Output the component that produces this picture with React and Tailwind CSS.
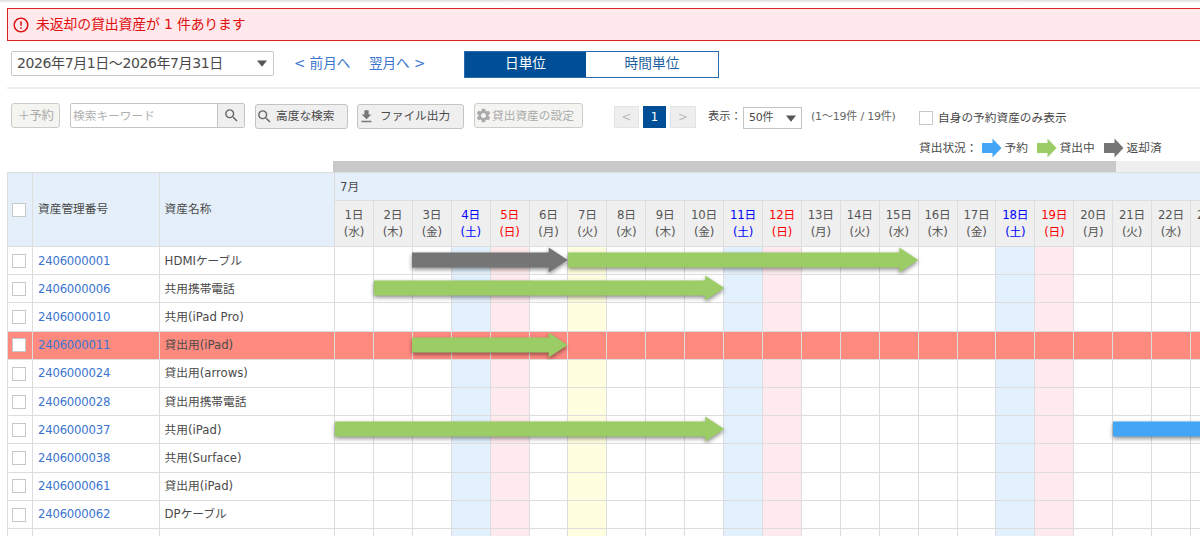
import React, { useState } from 'react'
import { MdSearch, MdFileDownload, MdSettings, MdErrorOutline } from 'react-icons/md'

const DAY_WIDTH = 38.92
const WEEKDAYS = ['水', '木', '金', '土', '日', '月', '火']
const TODAY = 7

const DAYS = Array.from({ length: 23 }, (_, i) => ({
  day: i + 1,
  weekday: WEEKDAYS[i % 7]
}))

const COLORS = {
  reserved: '#42a5f5',
  lent: '#9ccc65',
  returned: '#757575'
}

// from = first day, to = last day of the period
const ASSETS = [
  { id: '2406000001', name: 'HDMIケーブル', bars: [{ from: 3, to: 6, status: 'returned' }, { from: 7, to: 15, status: 'lent' }] },
  { id: '2406000006', name: '共用携帯電話', bars: [{ from: 2, to: 10, status: 'lent' }] },
  { id: '2406000010', name: '共用(iPad Pro)', bars: [] },
  { id: '2406000011', name: '貸出用(iPad)', overdue: true, bars: [{ from: 3, to: 6, status: 'lent' }] },
  { id: '2406000024', name: '貸出用(arrows)', bars: [] },
  { id: '2406000028', name: '貸出用携帯電話', bars: [] },
  { id: '2406000037', name: '共用(iPad)', bars: [{ from: 1, to: 10, status: 'lent' }, { from: 21, to: 27, status: 'reserved' }] },
  { id: '2406000038', name: '共用(Surface)', bars: [] },
  { id: '2406000061', name: '貸出用(iPad)', bars: [] },
  { id: '2406000062', name: 'DPケーブル', bars: [] },
  { id: '', name: '', bars: [] }
]

function dayText(weekday) {
  if (weekday === '土') return 'text-[#0000ff]'
  if (weekday === '日') return 'text-[#ff0000]'
  return 'text-[#555]'
}

function dayFill(day, weekday) {
  if (day === TODAY) return 'bg-[#ffffdf]'
  if (weekday === '土') return 'bg-[#e2f1fd]'
  if (weekday === '日') return 'bg-[#ffeaed]'
  return 'bg-white'
}

function Checkbox() {
  return <span className="block w-[14px] h-[14px] shrink-0 border border-[#c8c8c8] bg-white" />
}

function Caret() {
  return (
    <svg width="10" height="7" viewBox="0 0 10 7" className="shrink-0">
      <path d="M0 0.5h10L5 6.7z" fill="#555" />
    </svg>
  )
}

function Arrow({ from, to, status }) {
  const width = (to - from + 1) * DAY_WIDTH
  const neck = width - 19
  return (
    <svg
      className="absolute top-0 overflow-visible drop-shadow-[0px_2px_2px_rgba(0,0,0,0.45)]"
      style={{ left: (from - 1) * DAY_WIDTH - 0.4 }}
      width={width}
      height="26"
    >
      <path d={`M0 5.5H${neck}V0.5L${width} 13L${neck} 25.5V20.5H0z`} fill={COLORS[status]} />
    </svg>
  )
}

function LegendItem({ status, label, className }) {
  return (
    <div className={`flex items-center gap-[2.500px] ${className}`}>
      <svg width="20" height="20" viewBox="0 0 20 20">
        <path d="M0 5h10.500V0.500L19.500 10L10.500 19.500V15H0z" fill={COLORS[status]} />
      </svg>
      <span>{label}</span>
    </div>
  )
}

function AssetRow({ asset }) {
  const cell = asset.overdue ? 'bg-[#ff8a80]' : 'bg-white'
  return (
    <div className="flex h-[28.2px]">
      <div className={`w-[26px] shrink-0 flex items-center pl-[4px] pt-[0.6px] border-x border-b border-[#ddd] ${cell}`}>
        <Checkbox />
      </div>
      <div className={`w-[127px] shrink-0 flex items-center pl-[5px] border-r border-b border-[#ddd] text-[#3a75cf] tracking-[-0.22px] ${cell}`}>
        {asset.id}
      </div>
      <div className={`w-[175px] shrink-0 flex items-center pl-[4.6px] border-r border-b border-[#ddd] ${cell}`}>
        {asset.name}
      </div>
      <div className="relative flex shrink-0">
        {DAYS.map(({ day, weekday }) => (
          <div
            key={day}
            className={`w-[38.92px] shrink-0 border-r border-b border-[#ddd] ${asset.overdue ? cell : dayFill(day, weekday)}`}
          />
        ))}
        {asset.bars.map(bar => (
          <Arrow key={bar.from} {...bar} />
        ))}
      </div>
    </div>
  )
}

export default function App() {
  const [unit, setUnit] = useState('day')

  const unitClass = active => (active ? 'bg-[#004f96] text-white' : 'bg-white text-[#1f5f9f]')

  return (
    <div className="w-[1200px] h-[536px] overflow-hidden bg-white whitespace-nowrap text-[11.7px] leading-[18px] text-[#4a4a4a] font-['DejaVu_Sans','Noto_Sans_CJK_JP',sans-serif]">
      <div className="h-[3px] bg-gradient-to-b from-[#dcdcdc] to-white" />

      {/* Overdue alert */}
      <div className="mt-[5px] ml-[7px] h-[33px] flex items-center border border-r-0 border-[#dd2222] bg-[#ffe9ec] text-[#e01010] text-[13.9px]">
        <MdErrorOutline className="w-[18px] h-[18px] ml-[4px]" />
        <span className="ml-[6px] pb-[2px] tracking-[-0.15px]">未返却の貸出資産が 1 件あります</span>
      </div>

      {/* Period and unit */}
      <div className="ml-[7px] h-[48px] pl-[4px] pt-[10px] flex items-start border-b-2 border-[#ececec] text-[14px]">
        <div className="w-[263px] h-[25px] flex items-center justify-between pl-[5px] pr-[6px] border border-[#c8c8c8] rounded-[2px]">
          <span className="pb-px tracking-[-0.4px]">2026年7月1日〜2026年7月31日</span>
          <Caret />
        </div>
        <a className="ml-[20px] mt-[3px] w-[57px] text-[#3a75cf] text-[13.6px] tracking-[-0.05px]">&lt; 前月へ</a>
        <a className="ml-[18px] mt-[3px] w-[57px] text-[#3a75cf] text-[13.6px] tracking-[-0.05px]">翌月へ &gt;</a>
        <div className="ml-[38px] w-[255px] h-[27px] flex border border-[#2a6bac] text-[13.7px]">
          <button onClick={() => setUnit('day')} className={`w-[121px] pb-[3px] ${unitClass(unit === 'day')}`}>日単位</button>
          <button onClick={() => setUnit('hour')} className={`flex-1 pb-[3px] ${unitClass(unit === 'hour')}`}>時間単位</button>
        </div>
      </div>

      {/* Toolbar */}
      <div className="ml-[11px] mt-[14px] h-[27px] flex items-start">
        <button className="w-[49px] h-[25px] flex items-center justify-center border border-[#ccc] rounded-[3px] bg-[#f4f4f1] text-[#aaa] text-[12.4px]">
          <span className="tracking-[-0.5px]">＋予約</span>
        </button>
        <div className="ml-[10px] w-[175px] h-[25px] flex border border-[#c4c4c4] rounded-[2px]">
          <div className="w-[146px] flex items-center pl-[2px] text-[#b0b0b0]">検索キーワード</div>
          <button className="flex-1 flex items-center justify-center border-l border-[#c4c4c4] bg-[#efefef]">
            <MdSearch className="w-[17px] h-[17px] text-[#666]" />
          </button>
        </div>
        <button className="ml-[10px] mt-px w-[93px] h-[25px] flex items-center border border-[#c4c4c4] rounded-[3px] bg-[#efefef]">
          <MdSearch className="w-[17px] h-[17px] text-[#666]" />
          <span className="ml-[3px] pb-px">高度な検索</span>
        </button>
        <button className="ml-[9px] mt-px w-[107px] h-[25px] flex items-center border border-[#c4c4c4] rounded-[3px] bg-[#efefef]">
          <MdFileDownload className="w-[17px] h-[17px] text-[#777]" />
          <span className="ml-[5px] pb-px">ファイル出力</span>
        </button>
        <button className="ml-[10px] w-[109px] h-[25px] flex items-center border border-[#ccc] rounded-[3px] bg-[#f4f4f1] text-[#aaa]">
          <MdSettings className="w-[17px] h-[17px]" />
          <span>貸出資産の設定</span>
        </button>
        <div className="ml-[31px] mt-[3px] flex gap-[4px] text-center leading-[20px]">
          <button className="w-[25px] h-[22px] border border-[#e4e4e4] bg-[#eee] text-[#bbb]">&lt;</button>
          <button className="w-[23px] h-[22px] bg-[#004f96] text-white">1</button>
          <button className="w-[26px] h-[22px] border border-[#e4e4e4] bg-[#eee] text-[#bbb]">&gt;</button>
        </div>
        <span className="ml-[12px] mt-[5px] w-[35px] text-[11.2px]">表示：</span>
        <div className="mt-[4px] w-[59px] h-[22px] flex items-center justify-between pl-[5px] pr-[5px] border border-[#c4c4c4] text-[11px]">
          <span className="tracking-[-0.3px]">50件</span>
          <Caret />
        </div>
        <span className="ml-[9px] mt-[5px] w-[88px] text-[11px] tracking-[-0.2px] text-[#666]">(1〜19件 / 19件)</span>
        <div className="ml-[20px] mt-[6px] flex items-center gap-[5px]">
          <Checkbox />
          <span>自身の予約資産のみ表示</span>
        </div>
      </div>

      {/* Legend */}
      <div className="ml-[919px] mt-[8px] h-[20px] flex items-center">
        <span className="w-[63px]">貸出状況：</span>
        <LegendItem status="reserved" label="予約" className="w-[55px]" />
        <LegendItem status="lent" label="貸出中" className="w-[67px]" />
        <LegendItem status="returned" label="返却済" className="w-[60px]" />
      </div>

      {/* Horizontal scrollbar of the calendar */}
      <div className="ml-[333px] mt-[3px] h-[11px] bg-[#efefef]">
        <div className="w-[783px] h-full bg-[#c9c9c9]" />
      </div>

      {/* Schedule table */}
      <div className="ml-[7px]">
        <div className="flex h-[75px]">
          <div className="w-[26px] shrink-0 flex items-center pl-[4px] border border-[#ddd] bg-[#e4effa]">
            <Checkbox />
          </div>
          <div className="w-[127px] shrink-0 flex items-center pl-[5px] pb-[2px] border border-l-0 border-[#ddd] bg-[#e4effa]">資産管理番号</div>
          <div className="w-[175px] shrink-0 flex items-center pl-[4.6px] pb-[2px] border border-l-0 border-[#ddd] bg-[#e4effa]">資産名称</div>
          <div className="shrink-0">
            <div className="h-[29px] flex items-center pl-[5px] border-y border-[#ddd] bg-[#e4effa]">7月</div>
            <div className="flex h-[46px]">
              {DAYS.map(({ day, weekday }) => (
                <div
                  key={day}
                  className={`w-[38.92px] shrink-0 pt-[5px] border-r border-b border-[#ddd] bg-[#efefef] text-center tracking-[-0.2px] ${dayText(weekday)}`}
                >
                  <div>{day}日</div>
                  <div className="-mt-px">({weekday})</div>
                </div>
              ))}
            </div>
          </div>
        </div>
        {ASSETS.map((asset, i) => (
          <AssetRow key={i} asset={asset} />
        ))}
      </div>
    </div>
  )
}
